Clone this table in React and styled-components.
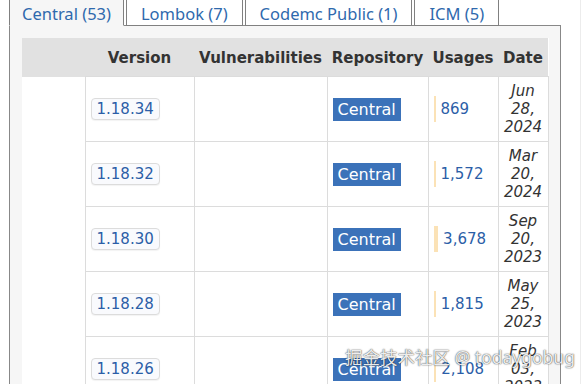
import React from "react";
import styled, { createGlobalStyle } from "styled-components";

const GlobalStyle = createGlobalStyle`
  html, body {
    margin: 0;
    padding: 0;
    background: #fff;
    overflow: hidden;
  }
  body {
    font-family: "DejaVu Sans", Verdana, sans-serif;
  }
`;

const Page = styled.div`
  position: relative;
  width: 580px;
  height: 384px;
  border-right: 1px solid #ececec;
  overflow: hidden;
`;

const TabBar = styled.ul`
  display: flex;
  gap: 2px;
  margin: -8px 0 -1px 9px;
  padding: 0;
  list-style: none;
`;

const Tab = styled.li`
  position: relative;
  z-index: ${(p) => (p.$active ? 1 : 0)};
  box-sizing: border-box;
  height: 34px;
  padding: 11px ${(p) => (p.$active ? "12px" : "14px")} 1px;
  border: 1px solid #808080;
  border-bottom-color: ${(p) => (p.$active ? "#f6f6f6" : "#808080")};
  background: ${(p) => (p.$active ? "#f6f6f6" : "#fff")};
  font-family: "Noto Sans", "Open Sans", sans-serif;
  font-size: 16.5px;
  line-height: 20px;
  color: #2f69ad;
  white-space: nowrap;
`;

const Panel = styled.div`
  box-sizing: border-box;
  width: 552px;
  margin-left: 9px;
  padding: 12px;
  border: 1px solid #888;
  background: #f6f6f6;
`;

const Grid = styled.table`
  width: 526px;
  table-layout: fixed;
  border-collapse: collapse;
  background: #fff;
  font-size: 15px;
  color: #333;
`;

const Head = styled.th`
  height: 37px;
  padding: 1px 0 0;
  background: #e1e1e1;
  font-weight: bold;
  font-size: 15px;
  text-align: center;
  white-space: nowrap;
  color: #333;
`;

const Cell = styled.td`
  height: 54px;
  padding: 5px ${(p) => (p.$center ? "0" : "5px")};
  border: 1px solid #dcdcdc;
  text-align: ${(p) => (p.$center ? "center" : "left")};
  vertical-align: middle;
`;

const GroupCell = styled.td`
  border: none;
  background: #fff;
`;

const VersionTag = styled.a`
  display: inline-block;
  padding: 1px 5px;
  border: 1px solid #dcdcdc;
  border-radius: 4px;
  background: #f9fafd;
  box-shadow: 0 1px 1px rgba(0, 0, 0, 0.05);
  color: #2b5ea7;
  line-height: 18px;
  text-decoration: none;
`;

const RepoTag = styled.span`
  display: inline-block;
  padding: 0 5px;
  background: #3b72b9;
  color: #fff;
  font-size: 16px;
  line-height: 23px;
`;

const Usage = styled.div`
  display: flex;
  align-items: center;
  gap: 5px;
  height: 26px;
`;

const UsageBar = styled.span`
  align-self: stretch;
  background: #fbe2b6;
`;

const UsageNum = styled.a`
  color: #2b5ea7;
  line-height: 18px;
  text-decoration: none;
`;

const DateText = styled.span`
  display: block;
  font-style: italic;
  line-height: 18px;
  color: #333;
`;

const Watermark = styled.div`
  position: absolute;
  left: 345px;
  top: 346px;
  font-family: "Noto Sans", "Noto Sans CJK SC", sans-serif;
  font-size: 17.5px;
  line-height: 22px;
  color: rgba(255, 255, 255, 0.92);
  text-shadow: 0 0 1px rgba(0, 0, 0, 0.75), 0 0 2px rgba(0, 0, 0, 0.4);
  white-space: nowrap;
`;

const tabs = [
  { label: "Central (53)", active: true },
  { label: "Lombok (7)" },
  { label: "Codemc Public (1)" },
  { label: "ICM (5)" },
];

const releases = [
  { version: "1.18.34", usages: 869, date: ["Jun", "28,", "2024"] },
  { version: "1.18.32", usages: 1572, date: ["Mar", "20,", "2024"] },
  { version: "1.18.30", usages: 3678, date: ["Sep", "20,", "2023"] },
  { version: "1.18.28", usages: 1815, date: ["May", "25,", "2023"] },
  { version: "1.18.26", usages: 2108, date: ["Feb", "03,", "2023"] },
];

const columns = [63, 109, 133, 101, 70, 50];

export default function App() {
  return (
    <Page>
      <GlobalStyle />
      <TabBar>
        {tabs.map((t) => (
          <Tab key={t.label} $active={t.active}>
            {t.label}
          </Tab>
        ))}
      </TabBar>
      <Panel>
        <Grid>
          <colgroup>
            {columns.map((w, i) => (
              <col key={i} style={{ width: w }} />
            ))}
          </colgroup>
          <thead>
            <tr>
              <Head />
              <Head>Version</Head>
              <Head>Vulnerabilities</Head>
              <Head>Repository</Head>
              <Head>Usages</Head>
              <Head>Date</Head>
            </tr>
          </thead>
          <tbody>
            {releases.map((r, i) => (
              <tr key={r.version}>
                {i === 0 && <GroupCell rowSpan={releases.length} />}
                <Cell>
                  <VersionTag>{r.version}</VersionTag>
                </Cell>
                <Cell />
                <Cell>
                  <RepoTag>Central</RepoTag>
                </Cell>
                <Cell>
                  <Usage>
                    <UsageBar style={{ width: Math.max(2, r.usages / 800) }} />
                    <UsageNum>{r.usages.toLocaleString("en-US")}</UsageNum>
                  </Usage>
                </Cell>
                <Cell $center>
                  {r.date.map((d) => (
                    <DateText key={d}>{d}</DateText>
                  ))}
                </Cell>
              </tr>
            ))}
          </tbody>
        </Grid>
      </Panel>
      <Watermark>掘金技术社区 @ todaygobug</Watermark>
    </Page>
  );
}
